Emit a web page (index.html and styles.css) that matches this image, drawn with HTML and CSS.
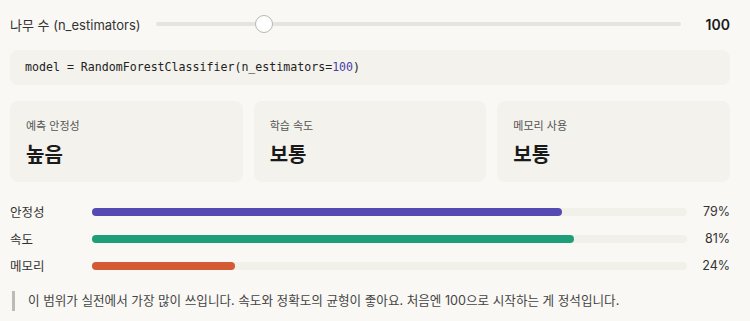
FILE: index.html
```html
<!DOCTYPE html>
<html lang="ko">
<head>
<meta charset="utf-8">
<link rel="stylesheet" href="styles.css">
</head>
<body>
<div class="wrap">
  <div class="slider-row">
    <span class="slider-label">나무 수 (n_estimators)</span>
    <div class="track"><div class="thumb" style="left:20.7%"></div></div>
    <span class="slider-value">100</span>
  </div>
  <div class="code">model = RandomForestClassifier(n_estimators=<span class="num">100</span>)</div>
  <div class="cards">
    <div class="card"><div class="card-label">예측 안정성</div><div class="card-value">높음</div></div>
    <div class="card"><div class="card-label">학습 속도</div><div class="card-value">보통</div></div>
    <div class="card"><div class="card-label">메모리 사용</div><div class="card-value">보통</div></div>
  </div>
  <div class="bars">
    <div class="bar-row"><span class="bar-label">안정성</span><div class="bar-track"><div class="bar-fill purple" style="width:79%"></div></div><span class="bar-pct">79%</span></div>
    <div class="bar-row"><span class="bar-label">속도</span><div class="bar-track"><div class="bar-fill green" style="width:81%"></div></div><span class="bar-pct">81%</span></div>
    <div class="bar-row"><span class="bar-label">메모리</span><div class="bar-track"><div class="bar-fill orange" style="width:24%"></div></div><span class="bar-pct">24%</span></div>
  </div>
  <div class="note">이 범위가 실전에서 가장 많이 쓰입니다. 속도와 정확도의 균형이 좋아요. 처음엔 100으로 시작하는 게 정석입니다.</div>
</div>
</body>
</html>
```
FILE: styles.css
```css
html, body {
  margin: 0;
  background: #f9f8f4;
}
body {
  font-family: "Inter", "Noto Sans CJK KR", sans-serif;
  color: #222;
}
.wrap {
  padding: 0 20px 0 10px;
}
.slider-row {
  height: 48px;
  display: flex;
  align-items: center;
  gap: 15px;
}
.slider-label {
  font-size: 13px;
  color: #333;
  white-space: nowrap;
}
.track {
  flex: 1;
  height: 4px;
  border-radius: 2px;
  background: #e6e4df;
  position: relative;
}
.thumb {
  position: absolute;
  top: 50%;
  width: 16px;
  height: 16px;
  margin: -9px 0 0 -9px;
  border-radius: 50%;
  background: #fff;
  border: 1px solid #b9b7b2;
}
.slider-value {
  width: 34px;
  text-align: right;
  font-size: 14px;
  font-weight: 600;
  color: #1a1a1a;
}
.code {
  margin-top: 2px;
  height: 35px;
  line-height: 35px;
  padding: 0 15px;
  background: #f3f2ec;
  border-radius: 8px;
  font-family: "DejaVu Sans Mono", monospace;
  font-size: 11.6px;
  color: #222;
}
.num { color: #4b3fa8; }
.cards {
  margin-top: 16px;
  display: grid;
  grid-template-columns: 1fr 1fr 1fr;
  gap: 11px;
}
.card {
  height: 81px;
  box-sizing: border-box;
  padding: 17px 16px 0;
  background: #f3f2ec;
  border-radius: 8px;
}
.card-label {
  font-size: 11px;
  color: #555;
  line-height: 16px;
}
.card-value {
  margin-top: 7px;
  font-size: 20px;
  font-weight: 700;
  color: #1a1a1a;
  line-height: 28px;
}
.bars {
  margin-top: 16px;
  display: flex;
  flex-direction: column;
}
.bar-row {
  height: 27px;
  display: flex;
  align-items: center;
}
.bar-label {
  width: 82px;
  font-size: 12.5px;
  color: #333;
}
.bar-track {
  flex: 1;
  height: 8px;
  border-radius: 4px;
  background: #f1f0e9;
}
.bar-fill {
  height: 100%;
  border-radius: 4px;
}
.purple { background: #5549b3; }
.green { background: #1e9e78; }
.orange { background: #d45a33; }
.bar-pct {
  width: 43px;
  text-align: right;
  font-size: 12.5px;
  color: #333;
}
.note {
  margin-top: 12px;
  border-left: 3px solid #bdbbb6;
  padding: 1px 0 1px 13px;
  margin-left: 2px;
  font-size: 12.6px;
  line-height: 18px;
  color: #444;
}
```
